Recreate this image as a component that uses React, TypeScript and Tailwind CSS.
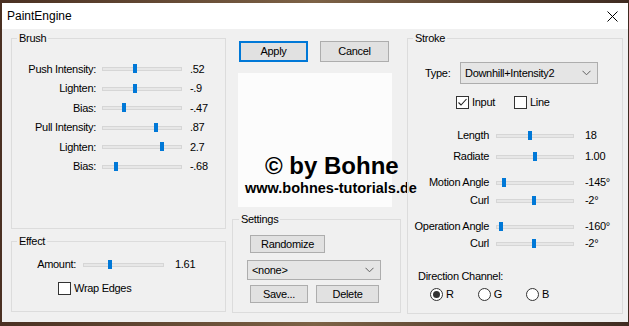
import React from "react";

type Row = { label: string; value: string; pos: number; mt?: string };

const brushRows: Row[] = [
  { label: "Push Intensity:", value: ".52", pos: 33 },
  { label: "Lighten:", value: "-.9", pos: 33 },
  { label: "Bias:", value: "-.47", pos: 22 },
  { label: "Pull Intensity:", value: ".87", pos: 54 },
  { label: "Lighten:", value: "2.7", pos: 60 },
  { label: "Bias:", value: "-.68", pos: 14 },
];

const strokeRows: Row[] = [
  { label: "Length", value: "18", pos: 34, mt: "mt-[17px]" },
  { label: "Radiate", value: "1.00", pos: 39, mt: "mt-[3px]" },
  { label: "Motion Angle", value: "-145°", pos: 8, mt: "mt-[8px]" },
  { label: "Curl", value: "-2°", pos: 38, mt: "mt-0" },
  { label: "Operation Angle", value: "-160°", pos: 5, mt: "mt-[8px]" },
  { label: "Curl", value: "-2°", pos: 38, mt: "-mt-[1px]" },
];

function Track({ pos, className }: { pos: number; className: string }) {
  return (
    <div className={`relative h-[11px] shrink-0 ${className}`}>
      <div className="absolute left-0 right-0 top-[4px] h-[4px] border border-[#d6d6d6] bg-[#e7e7e7]" />
      <div className="absolute top-[1px] h-[9px] w-[4px] bg-[#0078d7]" style={{ left: pos - 2 }} />
    </div>
  );
}

function Button({ children, className }: { children: React.ReactNode; className: string }) {
  return (
    <div
      className={`flex items-center justify-center border bg-[#e1e1e1] ${className}`}
    >
      {children}
    </div>
  );
}

function Chevron() {
  return (
    <svg width="9" height="6" viewBox="0 0 9 6" className="ml-auto mr-[6px]">
      <polyline points="0.5,0.8 4.5,4.8 8.5,0.8" fill="none" stroke="#606060" strokeWidth="1" />
    </svg>
  );
}

function Box({ checked }: { checked?: boolean }) {
  return (
    <div className="h-[13px] w-[13px] shrink-0 border border-[#333] bg-white">
      {checked && (
        <svg width="11" height="11" viewBox="0 0 11 11">
          <polyline points="1.5,5.5 4,8 9.5,2" fill="none" stroke="#222" strokeWidth="1.1" />
        </svg>
      )}
    </div>
  );
}

function Radio({ checked }: { checked?: boolean }) {
  return (
    <div className="flex h-[13px] w-[13px] shrink-0 items-center justify-center rounded-full border border-[#333] bg-white">
      {checked && <div className="h-[7px] w-[7px] rounded-full bg-[#333]" />}
    </div>
  );
}

export default function App() {
  return (
    <div className="h-[326px] w-[629px] overflow-hidden bg-linear-to-r from-[#4a3022] via-[#7d6246] to-[#3f2b21] pl-[2px] pt-[3px] font-['Liberation_Sans',Arial,sans-serif] text-[11px] tracking-[-0.3px] text-black">
      <div className="h-[319px] w-[626px]">
        {/* title bar */}
        <div className="flex h-[26px] items-center bg-white pl-[5px]">
          <span className="text-[12px] tracking-normal">PaintEngine</span>
          <svg width="11" height="11" viewBox="0 0 11 11" className="ml-auto mr-[10px]">
            <path d="M0.5 0.5 L10.5 10.5 M10.5 0.5 L0.5 10.5" stroke="#000" strokeWidth="1" />
          </svg>
        </div>

        <div className="flex h-[293px] bg-[#f0f0f0] pl-[9px] pt-[2px]">
          {/* left column */}
          <div className="flex w-[215px] flex-col">
            <fieldset className="h-[198px] border border-[#dcdcdc]">
              <legend className="ml-[5px] px-[2px] leading-[14px]">Brush</legend>
              <div className="flex flex-col pt-[14px]">
                {brushRows.map((r, i) => (
                  <div key={i} className="flex h-[19.5px] items-center">
                    <div className="w-[84px] text-right">{r.label}</div>
                    <Track pos={r.pos} className="ml-[6px] w-[80px]" />
                    <div className="ml-[8px]">{r.value}</div>
                  </div>
                ))}
              </div>
            </fieldset>

            <fieldset className="mt-[5px] h-[78px] border border-[#dcdcdc]">
              <legend className="ml-[5px] px-[2px] leading-[14px]">Effect</legend>
              <div className="flex flex-col pt-[7px]">
                <div className="flex h-[19px] items-center">
                  <div className="w-[64px] text-right">Amount:</div>
                  <Track pos={27} className="ml-[7px] w-[81px]" />
                  <div className="ml-[11px]">1.61</div>
                </div>
                <div className="ml-[46px] mt-[6px] flex items-center">
                  <Box />
                  <span className="ml-[3px]">Wrap Edges</span>
                </div>
              </div>
            </fieldset>
          </div>

          {/* middle column */}
          <div className="ml-[6px] flex w-[169px] flex-col">
            <div className="ml-[7px] mt-[10px] flex gap-[12px]">
              <Button className="h-[21px] w-[69px] border-2 border-[#0078d7]">Apply</Button>
              <Button className="h-[21px] w-[69px] border-[#adadad]">Cancel</Button>
            </div>
            <div className="ml-[6px] mt-[11px] flex h-[134px] w-[154px] flex-col justify-end bg-[#fcfcfc] pb-[11px] font-bold tracking-normal whitespace-nowrap">
              <div className="ml-[27px] text-[24px] leading-[24px]">© by Bohne</div>
              <div className="ml-[7px] mt-[2px] text-[14.5px] leading-[16px]">www.bohnes-tutorials.de</div>
            </div>
            <fieldset className="mt-[5px] h-[101px] border border-[#dcdcdc]">
              <legend className="ml-[6px] px-[2px] leading-[14px]">Settings</legend>
              <div className="flex flex-col pt-[9px]">
                <Button className="ml-[17px] h-[18px] w-[75px] border-[#adadad]">Randomize</Button>
                <div className="ml-[14px] mt-[7px] flex h-[20px] w-[134px] items-center border border-[#adadad] bg-[#e5e5e5] pl-[4px]">
                  <span>&lt;none&gt;</span>
                  <Chevron />
                </div>
                <div className="ml-[17px] mt-[5px] flex gap-[8px]">
                  <Button className="h-[18px] w-[58px] border-[#adadad]">Save...</Button>
                  <Button className="h-[18px] w-[63px] border-[#adadad]">Delete</Button>
                </div>
              </div>
            </fieldset>
          </div>

          {/* right column */}
          <div className="ml-[6px] w-[216px]">
            <fieldset className="h-[283px] border border-[#dcdcdc]">
              <legend className="ml-[5px] px-[2px] leading-[14px]">Stroke</legend>
              <div className="flex flex-col pt-[17px]">
                <div className="flex h-[22px] items-center">
                  <div className="ml-[17px] w-[35px]">Type:</div>
                  <div className="flex h-[22px] w-[138px] items-center border border-[#adadad] bg-[#e5e5e5] pl-[4px]">
                    <span>Downhill+Intensity2</span>
                    <Chevron />
                  </div>
                </div>
                <div className="ml-[48px] mt-[12px] flex h-[13px] items-center">
                  <Box checked />
                  <span className="ml-[3px]">Input</span>
                  <div className="ml-[19px]">
                    <Box />
                  </div>
                  <span className="ml-[3px]">Line</span>
                </div>
                {strokeRows.map((r, i) => (
                  <div key={i} className={`flex h-[18px] items-center ${r.mt}`}>
                    <div className="w-[81px] text-right">{r.label}</div>
                    <Track pos={r.pos} className="ml-[7px] w-[78px]" />
                    <div className="ml-[11px]">{r.value}</div>
                  </div>
                ))}
                <div className="ml-[10px] mt-[17px] leading-[14px]">Direction Channel:</div>
                <div className="ml-[22px] mt-[5px] flex h-[13px] items-center">
                  <Radio checked />
                  <span className="ml-[3px]">R</span>
                  <div className="ml-[24px]">
                    <Radio />
                  </div>
                  <span className="ml-[3px]">G</span>
                  <div className="ml-[24px]">
                    <Radio />
                  </div>
                  <span className="ml-[3px]">B</span>
                </div>
              </div>
            </fieldset>
          </div>
        </div>
      </div>
    </div>
  );
}
